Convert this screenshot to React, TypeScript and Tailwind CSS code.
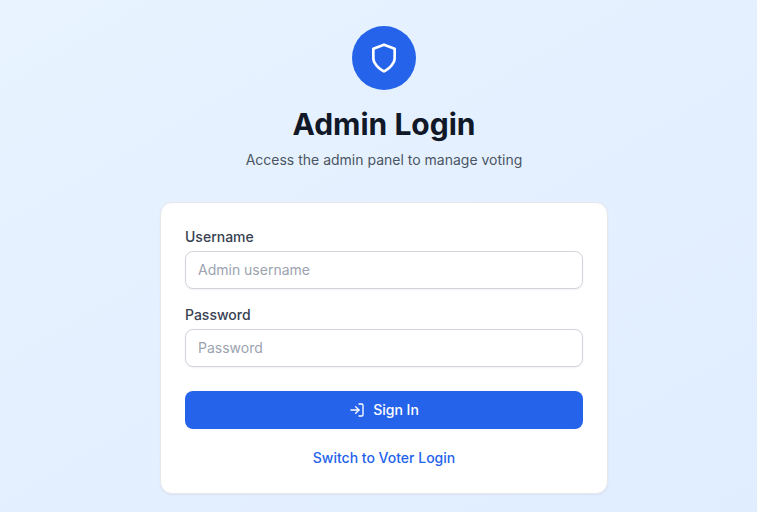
import { LogIn } from "lucide-react";

function ShieldIcon() {
  return (
    <svg className="size-8" viewBox="0 0 24 24" fill="none" stroke="currentColor" strokeWidth="2" strokeLinecap="round" strokeLinejoin="round" aria-hidden="true">
      <path d="M12 22s8-4 8-10V5l-8-3-8 3v7c0 6 8 10 8 10" />
    </svg>
  );
}

function Field({ label, placeholder, type }: { label: string; placeholder: string; type: string }) {
  return (
    <label className="block">
      <span className="mb-1 block text-sm font-medium text-[#374151]">{label}</span>
      <input
        type={type}
        placeholder={placeholder}
        className="block h-[38px] w-full rounded-lg border border-[#d1d5db] bg-white px-3 pb-[2px] text-sm shadow-[0_1px_2px_rgba(0,0,0,0.05)] placeholder:text-[#9ca3af]"
      />
    </label>
  );
}

export default function App() {
  return (
    <div className="flex min-h-screen justify-center bg-[linear-gradient(150deg,#e8f3ff,#e0edff)] pt-[26px] font-['Inter',sans-serif] antialiased">
      <div className="ml-[11px] w-[448px]">
        <div className="text-center">
          <div className="mx-auto flex size-16 items-center justify-center rounded-full bg-[#2563eb] text-white">
            <ShieldIcon />
          </div>
          <h1 className="mt-4 text-[30px] leading-9 font-bold text-[#111827]">Admin Login</h1>
          <p className="mt-2 text-sm text-[#4b5563]">Access the admin panel to manage voting</p>
        </div>
        <div className="mt-8 h-[292px] rounded-xl border border-[#e5e7eb] bg-white p-6 shadow-[0_1px_2px_rgba(0,0,0,0.05)]">
          <form className="space-y-4">
            <Field label="Username" placeholder="Admin username" type="text" />
            <Field label="Password" placeholder="Password" type="password" />
            <button type="button" className="mt-6 flex h-[38px] w-full items-center justify-center gap-2 rounded-lg bg-[#2563eb] text-sm font-medium text-white">
              <LogIn size={16} />
              Sign In
            </button>
          </form>
          <div className="mt-4 text-center">
            <button type="button" className="text-sm font-medium text-[#2563eb]">Switch to Voter Login</button>
          </div>
        </div>
      </div>
    </div>
  );
}
